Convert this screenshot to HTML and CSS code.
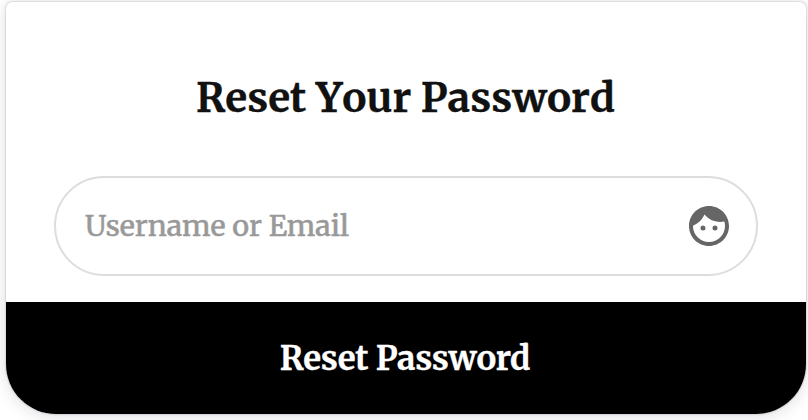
FILE: index.html
```html
<!DOCTYPE html>
<html lang="en">
<head>
<meta charset="utf-8">
<title>Reset Your Password</title>
<link rel="stylesheet" href="styles.css">
</head>
<body>
<main class="card">
  <h1 class="title">Reset Your Password</h1>
  <div class="field">
    <span class="placeholder">Username or Email</span>
    <svg class="face" viewBox="2 2 20 20"><path d="M10.25 13a1.25 1.25 0 1 1-2.5 0 1.25 1.25 0 0 1 2.5 0zM15 11.750a1.25 1.25 0 1 0 0 2.500 1.25 1.25 0 0 0 0-2.500zM22 12c0 5.520-4.480 10-10 10S2 17.520 2 12 6.480 2 12 2s10 4.480 10 10zm-2 0c0-.780-.120-1.530-.330-2.240-.700.150-1.420.240-2.170.240-3.130 0-5.920-1.440-7.760-3.690C8.690 8.870 6.600 10.880 4 11.860c.010.040 0 .090 0 .140 0 4.410 3.590 8 8 8s8-3.590 8-8z"/></svg>
  </div>
  <button class="submit" type="button">Reset Password</button>
</main>
</body>
</html>
```
FILE: styles.css
```css
body { margin: 0; background: #fff; font-family: Merriweather, "Noto Serif", "DejaVu Serif", serif; }
.card {
  box-sizing: border-box; width: 800px; height: 412px; margin: 2px 2px 6px 6px;
  padding-top: 68px; overflow: hidden; border-radius: 6px 6px 50px 50px;
  box-shadow: 0 0 2px rgba(20,20,50,.35), 0 2px 16px rgba(20,20,50,.14);
  display: flex; flex-direction: column; background: #fff;
}
.title { margin: 0 0 50px; padding-right: 1px; height: 56px; line-height: 56px; text-align: center; white-space: nowrap; font-size: 40.5px; font-kerning: none; color: #111; -webkit-text-stroke: .3px #111; }
.field {
  box-sizing: border-box; height: 100px; margin: 0 48px 26px; padding: 0 27px 0 29px;
  border: 2px solid #ddd; border-radius: 50px; display: flex; align-items: center;
  justify-content: space-between; color: #999; font-size: 28.7px;
}
.placeholder { -webkit-text-stroke: .5px #999; }
.face { width: 40px; height: 40px; fill: #666; }
.submit {
  flex: 1; border: 0; padding: 0 2px 0 0; background: #000; color: #fff; font: 700 33px Merriweather, "Noto Serif", "DejaVu Serif", serif;
  letter-spacing: -.25px; -webkit-text-stroke: .3px #fff;
}
```
